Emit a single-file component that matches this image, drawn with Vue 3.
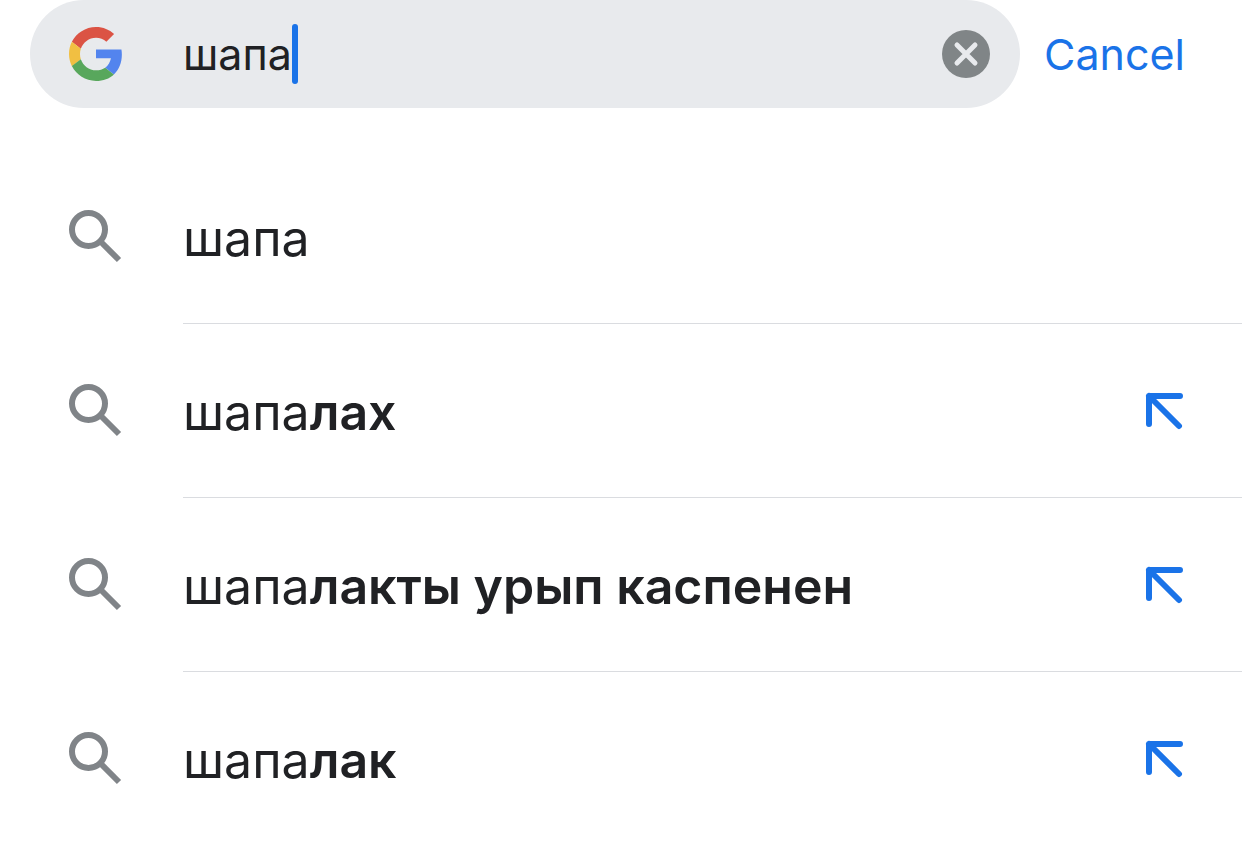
<template>
  <main class="search-page">
    <form class="search-header" role="search" @submit.prevent>
      <div class="search-box">
        <svg class="google-icon" viewBox="0 0 48 48" aria-hidden="true">
          <path fill="#db5344" d="M24 9.5c3.54 0 6.71 1.22 9.21 3.6l6.85-6.85C35.9 2.38 30.47 0 24 0 14.62 0 6.51 5.38 2.56 13.22l7.98 6.19C12.43 13.72 17.74 9.5 24 9.5z" />
          <path fill="#5384ee" d="M46.98 24.55c0-1.57-.15-3.09-.38-4.55H24v7.8h13.3c-.7 3.3-2.6 6.7-5.14 8.4l7.73 6c4.51-4.18 7.09-10.36 7.09-17.65z" />
          <path fill="#f1bf42" d="M10.53 28.59c-.48-1.45-.76-2.99-.76-4.59s.27-3.14.76-4.59l-7.98-6.19C.92 16.46 0 20.12 0 24c0 3.88.92 7.54 2.56 10.78l7.97-6.19z" />
          <path fill="#58a75c" d="M24 48c6.48 0 11.93-2.13 15.89-5.81l-7.73-6c-2.15 1.45-4.92 2.3-8.16 2.3-6.26 0-11.57-4.22-13.47-9.91l-7.98 6.19C6.51 42.62 14.62 48 24 48z" />
        </svg>
        <div class="query">
          <input ref="queryInput" v-model="query" class="query-input" type="text" size="4" aria-label="Search" autocomplete="off" spellcheck="false" />
          <span class="caret"></span>
        </div>
        <button class="clear-button" type="button" aria-label="Clear" @click="clearQuery">
          <svg viewBox="0 0 48 48" aria-hidden="true">
            <circle cx="24" cy="24" r="24" fill="#808587" />
            <path d="M15 15l18 18M33 15L15 33" stroke="#e8eaed" stroke-width="5" stroke-linecap="round" />
          </svg>
        </button>
      </div>
      <button class="cancel-button" type="button" @click="clearQuery">Cancel</button>
    </form>

    <ul class="suggestions">
      <li v-for="item in suggestions" :key="item.rest" class="suggestion">
        <svg class="search-icon" viewBox="0 1 54 54" fill="none" stroke="#808488" stroke-width="6" aria-hidden="true">
          <circle cx="20.5" cy="20.5" r="16.5" />
          <path d="M32 32l19 19" />
        </svg>
        <div class="suggestion-body">
          <span class="suggestion-text">{{ item.typed }}<b>{{ item.rest }}</b></span>
          <button v-if="item.rest" class="fill-button" type="button" aria-label="Use suggestion" @click="query = item.typed + item.rest">
            <svg viewBox="0 0 38 38" aria-hidden="true">
              <path d="M35 4H4v28M4 4l30 30" />
            </svg>
          </button>
        </div>
      </li>
    </ul>
  </main>
</template>

<script setup>
import { ref } from 'vue';

const query = ref('шапа');
const queryInput = ref(null);

const suggestions = [
  { typed: 'шапа', rest: '' },
  { typed: 'шапа', rest: 'лах' },
  { typed: 'шапа', rest: 'лакты урып каспенен' },
  { typed: 'шапа', rest: 'лак' }
];

function clearQuery() {
  query.value = '';
  queryInput.value.focus();
}
</script>

<style>
body {
  margin: 0;
  background: #fff;
}
</style>

<style scoped>
.search-page {
  font-family: Inter, 'Liberation Sans', sans-serif;
  color: #202124;
}

button {
  padding: 0;
  border: 0;
  background: none;
  font: inherit;
  cursor: pointer;
}

button svg {
  display: block;
  width: 100%;
  height: 100%;
}

.search-header {
  display: flex;
  align-items: center;
  gap: 24px;
  padding: 0 57px 0 30px;
}

.search-box {
  flex: 1;
  min-width: 0;
  display: flex;
  align-items: center;
  box-sizing: border-box;
  height: 108px;
  padding: 0 30px 0 39px;
  border-radius: 54px;
  background: #e8eaed;
}

.google-icon {
  flex: none;
  width: 54px;
  height: 54px;
  margin-right: 20px;
}

.query {
  flex: 1;
  min-width: 0;
  display: flex;
  align-items: center;
  padding-left: 40px;
}

.query-input {
  field-sizing: content;
  min-width: 0;
  padding: 0;
  border: 0;
  outline: none;
  background: none;
  font-family: inherit;
  font-size: 43px;
  line-height: 56px;
  color: inherit;
  caret-color: transparent;
}

.caret {
  flex: none;
  width: 6px;
  height: 60px;
  border-radius: 3px;
  background: #1a73e8;
}

.clear-button {
  flex: none;
  width: 48px;
  height: 48px;
}

.cancel-button {
  font-size: 43px;
  line-height: 56px;
  color: #1a73e8;
}

.suggestions {
  margin: 42px 0 0;
  padding: 0;
  list-style: none;
}

.suggestion {
  display: flex;
  align-items: center;
  gap: 61px;
  padding-left: 68px;
}

.search-icon {
  flex: none;
  width: 54px;
  height: 54px;
}

.suggestion-body {
  flex: 1;
  min-width: 0;
  display: flex;
  align-items: center;
  justify-content: space-between;
  box-sizing: border-box;
  min-height: 174px;
  padding-right: 59px;
  border-bottom: 1px solid #dadce0;
}

.suggestion:last-child .suggestion-body {
  border-bottom-color: transparent;
}

.suggestion-text {
  padding-top: 2px;
  font-size: 50px;
  line-height: 60px;
}

.suggestion-text b {
  font-weight: 600;
}

.fill-button {
  flex: none;
  width: 38px;
  height: 38px;
}

.fill-button path {
  fill: none;
  stroke: #1a73e8;
  stroke-width: 6;
  stroke-linecap: round;
  stroke-linejoin: round;
}
</style>
